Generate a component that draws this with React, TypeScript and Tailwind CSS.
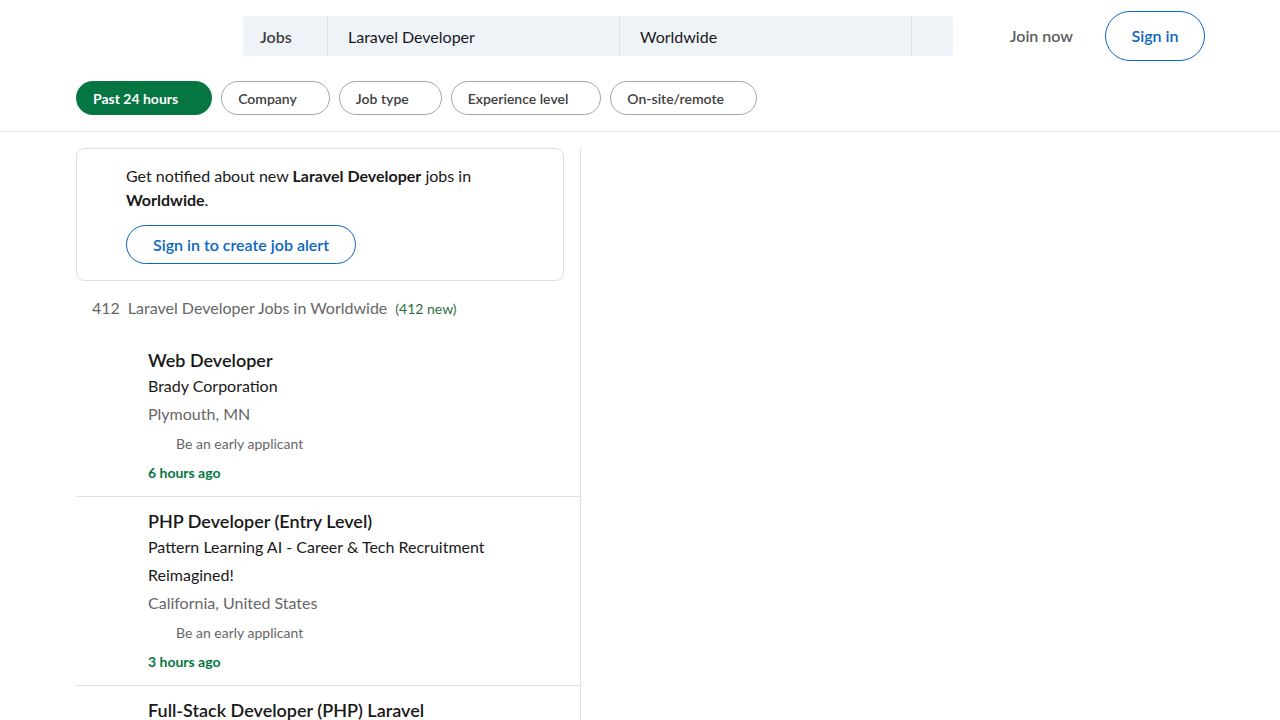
const font = "font-['Segoe_UI','Lato','Liberation_Sans',sans-serif]";

const filters = ["Company", "Job type", "Experience level", "On-site/remote"];

const jobs = [
  {
    title: "Web Developer",
    company: "Brady Corporation",
    location: "Plymouth, MN",
    posted: "6 hours ago",
  },
  {
    title: "PHP Developer (Entry Level)",
    company: "Pattern Learning AI - Career & Tech Recruitment Reimagined!",
    location: "California, United States",
    posted: "3 hours ago",
  },
  {
    title: "Full-Stack Developer (PHP) Laravel",
    company: "Confidential",
    location: "Remote",
    posted: "2 hours ago",
  },
];

function JobCard({ job }: { job: (typeof jobs)[number] }) {
  return (
    <li className="border-b border-[#e0e0e0] pb-[13px] pl-[72px] pr-[56px] pt-[12px]">
      <h3 className="text-[18px] font-semibold leading-6 text-[#191919]">{job.title}</h3>
      <h4 className="text-[16px] leading-7 text-[#191919]">{job.company}</h4>
      <p className="text-[16px] leading-7 text-[#666666]">{job.location}</p>
      <div className="mt-[3px] flex h-6 items-center pl-7 text-[14px] text-[#666666]">
        Be an early applicant
      </div>
      <time className="mt-[8px] block text-[14px] font-bold leading-5 text-[#057642]">
        {job.posted}
      </time>
    </li>
  );
}

export default function App() {
  return (
    <div className={`min-h-screen bg-white ${font}`}>
      <header className="border-b border-[#e8e8e8]">
        <div className="mx-auto w-[1128px]">
          <nav className="flex h-[72px] items-center">
            <div className="w-[167px]" />
            <div className="flex h-10 w-[710px] items-stretch rounded-[4px] bg-[#eef3f8] pt-[1px] text-[16px] text-[#191919]">
              <div className="flex w-[85px] items-center border-r border-[#dce0e4] pl-[17px] font-semibold text-[#404040]">
                Jobs
              </div>
              <div className="flex w-[292px] items-center border-r border-[#dce0e4] pl-5">
                Laravel Developer
              </div>
              <div className="flex w-[292px] items-center border-r border-[#dce0e4] pl-5">
                Worldwide
              </div>
              <div className="flex-1" />
            </div>
            <div className="ml-auto flex items-center">
              <a className="px-3 text-[16px] font-semibold text-[#5e5e5e]">Join now</a>
              <a className="ml-[20px] mr-[-1px] flex h-[50px] w-[100px] items-center justify-center rounded-full border border-[#0a66c2] text-[16px] font-semibold text-[#0a66c2]">
                Sign in
              </a>
            </div>
          </nav>
          <div className="flex h-[59px] items-start gap-[9px] pt-[9px]">
            <button className="flex h-[34px] items-center rounded-full bg-[#057642] pl-[17px] pr-[34px] text-[14px] font-bold text-white">
              Past 24 hours
            </button>
            {filters.map((f) => (
              <button
                key={f}
                className="flex h-[34px] items-center rounded-full border border-[#a6a6a6] pl-[16px] pr-[32px] text-[14px] font-semibold text-[#404040]"
              >
                {f}
              </button>
            ))}
          </div>
        </div>
      </header>

      <main className="mx-auto w-[1128px] pt-4">
        <section className="w-[505px] border-r border-[#e0e0e0]">
          <div className="mr-[16px] rounded-lg border border-[#e0e0e0] pb-4 pl-[49px] pr-6 pt-[15px]">
            <p className="text-[16px] leading-6 text-[#191919]">
              Get notified about new <strong className="font-bold">Laravel Developer</strong> jobs in{" "}
              <strong className="font-bold">Worldwide</strong>.
            </p>
            <button className="mt-[13px] flex h-[39px] items-center rounded-full border border-[#0a66c2] px-[26px] text-[16px] font-semibold text-[#0a66c2]">
              Sign in to create job alert
            </button>
          </div>

          <h1 className="mt-[15px] pl-4 text-[16px] leading-6 text-[#666666]">
            412<span className="ml-2">Laravel Developer Jobs in Worldwide</span>
            <span className="ml-2 text-[14px] text-[#2f6e3f]">(412 new)</span>
          </h1>

          <ul className="mt-[15px]">
            {jobs.map((job) => (
              <JobCard key={job.title} job={job} />
            ))}
          </ul>
        </section>
      </main>
    </div>
  );
}
